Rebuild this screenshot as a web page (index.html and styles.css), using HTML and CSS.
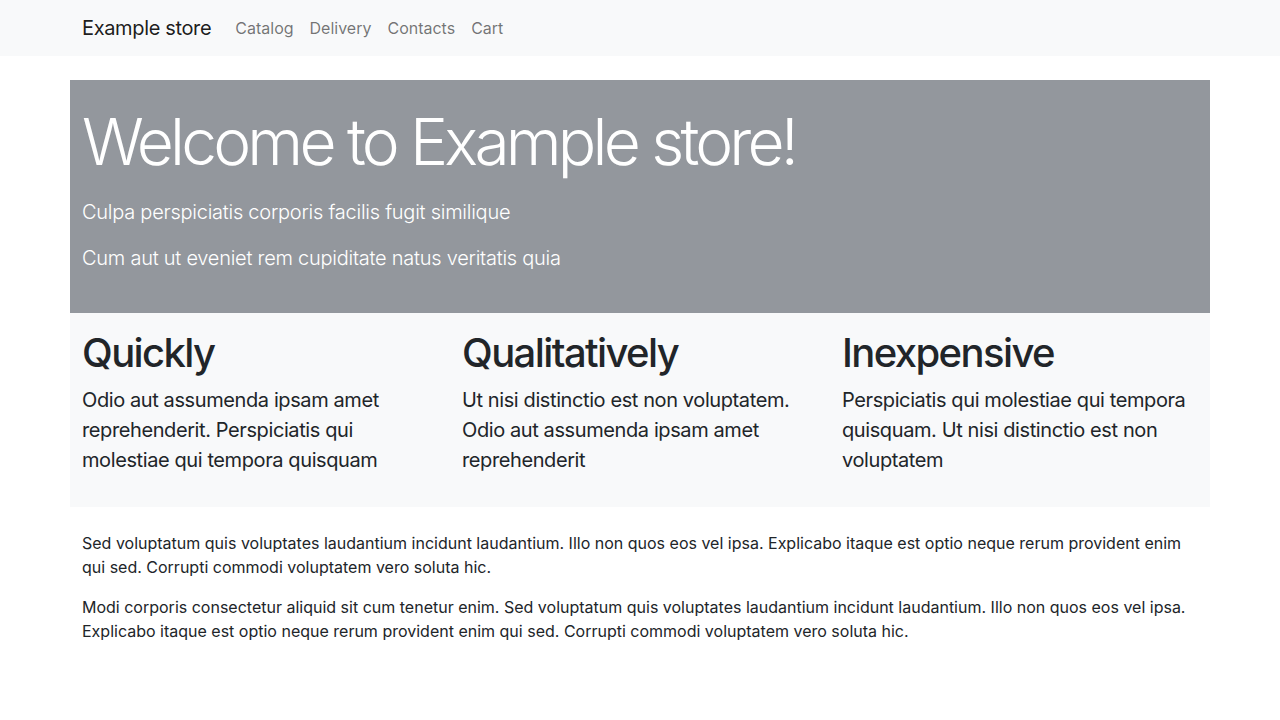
FILE: index.html
```html
<!DOCTYPE html>
<html lang="en">
<head>
<meta charset="utf-8">
<title>Example store</title>
<link rel="stylesheet" href="styles.css">
</head>
<body>
<nav class="navbar">
  <div class="container nav-inner">
    <a class="brand" href="#">Example store</a>
    <ul class="nav-links">
      <li><a href="#">Catalog</a></li>
      <li><a href="#">Delivery</a></li>
      <li><a href="#">Contacts</a></li>
      <li><a href="#">Cart</a></li>
    </ul>
  </div>
</nav>
<main class="container main">
  <section class="hero">
    <h1 class="hero-title">Welcome to Example store!</h1>
    <p class="lead">Culpa perspiciatis corporis facilis fugit similique</p>
    <p class="lead">Cum aut ut eveniet rem cupiditate natus veritatis quia</p>
  </section>
  <section class="features">
    <div class="feature">
      <h2 class="feature-title">Quickly</h2>
      <p class="feature-text">Odio aut assumenda ipsam amet reprehenderit. Perspiciatis qui molestiae qui tempora quisquam</p>
    </div>
    <div class="feature">
      <h2 class="feature-title">Qualitatively</h2>
      <p class="feature-text">Ut nisi distinctio est non voluptatem. Odio aut assumenda ipsam amet reprehenderit</p>
    </div>
    <div class="feature">
      <h2 class="feature-title">Inexpensive</h2>
      <p class="feature-text">Perspiciatis qui molestiae qui tempora quisquam. Ut nisi distinctio est non voluptatem</p>
    </div>
  </section>
  <section class="content">
    <p>Sed voluptatum quis voluptates laudantium incidunt laudantium. Illo non quos eos vel ipsa. Explicabo itaque est optio neque rerum provident enim qui sed. Corrupti commodi voluptatem vero soluta hic.</p>
    <p>Modi corporis consectetur aliquid sit cum tenetur enim. Sed voluptatum quis voluptates laudantium incidunt laudantium. Illo non quos eos vel ipsa. Explicabo itaque est optio neque rerum provident enim qui sed. Corrupti commodi voluptatem vero soluta hic.</p>
  </section>
</main>
</body>
</html>
```
FILE: styles.css
```css
* { box-sizing: border-box; }
body {
  margin: 0;
  font-family: Inter, "Noto Sans", sans-serif;
  font-size: 16px;
  line-height: 1.5;
  color: #212529;
  background: #fff;
}
.container {
  width: 1140px;
  margin: 0 auto;
  padding: 0 12px;
}
.navbar {
  background: #f8f9fa;
  height: 56px;
  display: flex;
  align-items: center;
}
.nav-inner {
  display: flex;
  align-items: center;
}
.brand {
  font-size: 20px;
  letter-spacing: -0.35px;
  color: rgba(0,0,0,.9);
  text-decoration: none;
  margin-right: 16px;
  padding: 5px 0;
}
.nav-links {
  list-style: none;
  margin: 0;
  padding: 0;
  display: flex;
}
.nav-links a {
  display: block;
  padding: 8px;
  color: rgba(0,0,0,.55);
  text-decoration: none;
}
.main {
  margin-top: 24px;
  padding: 0;
}
.hero {
  background: #93979d;
  color: #fff;
  padding: 24px 12px 24px;
}
.hero-title {
  margin: 0 0 16px;
  font-size: 64px;
  font-weight: 300;
  line-height: 1.2;
  letter-spacing: -3.8px;
}
.lead {
  font-size: 20px;
  font-weight: 300;
  letter-spacing: -0.25px;
  margin: 0 0 16px;
}
.features {
  background: #f8f9fa;
  display: grid;
  grid-template-columns: repeat(3, 1fr);
  padding: 16px 0;
}
.feature {
  padding: 0 12px;
}
.feature-title {
  margin: 0 0 8px;
  font-size: 40px;
  font-weight: 500;
  line-height: 1.2;
  letter-spacing: -1.6px;
}
.feature-text {
  margin: 0 0 16px;
  font-size: 20px;
  letter-spacing: -0.4px;
}
.content {
  padding: 24px 12px 0;
}
.content p {
  margin: 0 0 16px;
}
```
